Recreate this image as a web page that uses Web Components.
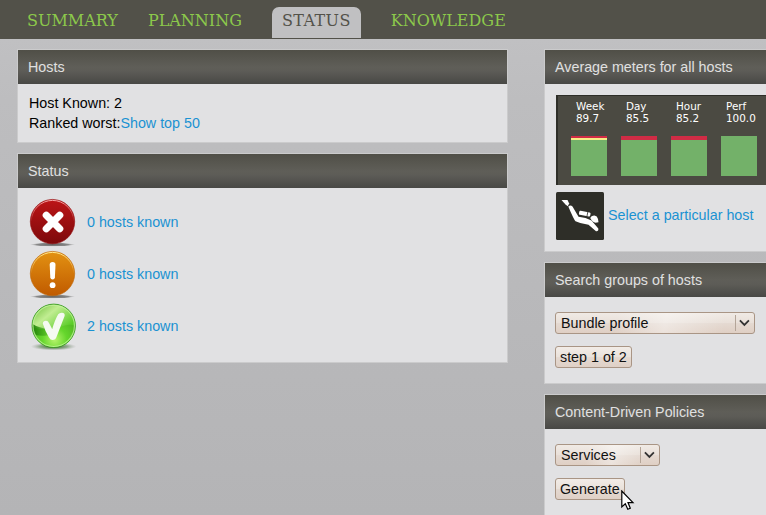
<!DOCTYPE html>
<html lang="en"><head><meta charset="utf-8"><title>Status</title>
<style>
html,body{margin:0;height:100%;overflow:hidden}
body{font:14.3px/20px "Liberation Sans",Arial,sans-serif;color:#000;background:linear-gradient(#c0c0c2 39px,#bdbdbf 100px,#b4b4b6 515px)}
</style></head><body>
<status-page></status-page>
<script>
const define=(name,html,init)=>customElements.define(name,class extends HTMLElement{
  constructor(){super();this.attachShadow({mode:'open'});}
  connectedCallback(){this.shadowRoot.innerHTML=html;if(init)init(this,this.shadowRoot);}
});

define('nav-tab',`<style>
:host{display:block;box-sizing:border-box;height:31px;padding:0 10px;border-radius:7px 7px 0 0;font:16px/27px "DejaVu Serif",serif;color:#8cc84b;white-space:nowrap}
:host([active]){background:#c0c0c2;color:#53524a;margin:0 10px;letter-spacing:.37px}
</style><slot></slot>`);

define('nav-bar',`<style>
:host{display:flex;box-sizing:border-box;height:39px;padding:7px 0 1px 17px;gap:10px;background:#525149}
</style><slot></slot>`);

define('info-panel',`<style>
:host{display:block;box-sizing:border-box;border:1px solid #cbcbcc;background:#e1e1e3}
header{height:34px;box-sizing:border-box;padding-left:10px;line-height:34px;color:#e0e0e0;background:linear-gradient(#504f47,#5f5e58 50%,#5d5c57 62%,#484845);white-space:nowrap}
.body{padding:var(--pad,9px 11px)}
</style><header></header><div class="body"><slot></slot></div>`,(el,r)=>{r.querySelector('header').textContent=el.getAttribute('heading');});

define('text-link',`<style>:host{color:#1a92d2;white-space:nowrap}</style><slot></slot>`);

define('status-icon',`<style>:host{display:block;width:48px;height:52px}svg{display:block}</style><svg width="48" height="52" viewBox="0 0 48 52"></svg>`,(el,r)=>{
  const kind=el.getAttribute('kind');
  const disc=(a,b,rim,edge)=>`<defs><linearGradient id="g" x2="0" y2="1"><stop stop-color="${a}"/><stop offset="1" stop-color="${b}"/></linearGradient>
  <linearGradient id="h" x2="0" y2="1"><stop stop-color="${rim}"/><stop offset=".5" stop-color="${rim}" stop-opacity="0"/></linearGradient>
  <radialGradient id="s"><stop stop-color="#666"/><stop offset=".7" stop-color="#888"/><stop offset="1" stop-color="#aaa" stop-opacity="0"/></radialGradient></defs>
  <ellipse cx="23.5" cy="47.600" rx="22.500" ry="2" fill="url(#s)"/><circle cx="23.5" cy="24.600" r="22.2" fill="url(#g)" stroke="${edge}" stroke-width=".6"/><circle cx="23.5" cy="24.600" r="21.2" fill="none" stroke="url(#h)" stroke-width="1"/>`;
  const art={
    error:disc('#bd1517','#7d090b','#f5a5a5','#930c0e')+`<path d="M17.300 18.300 30.700 31.700M30.700 18.300 17.300 31.700" stroke="#fff" stroke-width="7.200" stroke-linecap="round"/>`,
    warn:disc('#e39212','#c05a00','#ffe891','#bd6706')+`<path d="M20.700 15.8Q20.700 13 23.6 13T26.500 15.8L25.900 28.500Q25.600 30.500 23.6 30.500T21.300 28.500Z" fill="#fff"/><circle cx="23.6" cy="36.200" r="2.900" fill="#fff"/>`,
    ok:`<defs><radialGradient id="g" cx=".52" cy=".82" r=".8"><stop stop-color="#b6f36c"/><stop offset=".35" stop-color="#65d62c"/><stop offset=".8" stop-color="#4aae20"/><stop offset="1" stop-color="#3d9f1a"/></radialGradient>
    <linearGradient id="l" x2="1" y2=".7"><stop stop-color="#69bd35"/><stop offset=".45" stop-color="#c1ed92"/><stop offset="1" stop-color="#58cc26"/></linearGradient>
    <linearGradient id="d" x2="1"><stop stop-color="#218308"/><stop offset=".6" stop-color="#48ad1e" stop-opacity=".5"/><stop offset="1" stop-color="#63ce2a" stop-opacity="0"/></linearGradient>
    <radialGradient id="s"><stop stop-color="#235a12"/><stop offset=".6" stop-color="#71926a" stop-opacity=".7"/><stop offset="1" stop-color="#aaa" stop-opacity="0"/></radialGradient></defs>
    <ellipse cx="24.600" cy="45.5" rx="23" ry="4" fill="url(#s)"/><circle cx="24.700" cy="24.8" r="21.700" fill="url(#g)" stroke="#319518" stroke-width=".8"/>
    <path d="M3.700 24.700A21 21 0 0 1 45.700 24.700C36 20 25 33 3.700 26Z" fill="url(#l)"/><path d="M3.700 23C11 28 22 29 29 25C26 35 15 36 6 34Q3.200 29 3.700 23Z" fill="url(#d)"/>
    <circle cx="24.700" cy="24.8" r="20.700" fill="none" stroke="#c5f5a0" stroke-opacity=".75" stroke-width="1.1"/>
    <path d="M13.800 22.500Q14 20 17 19.800 19 19.800 20 22L23.200 28Q26 18.500 29.200 13.200 30.500 11.500 33 11.700 36.300 12 35.600 15L27.500 36Q26.500 39 23.500 39 21.500 39 20 36.500Q16 30 13.800 22.500Z" fill="#f5faf1"/>`};
  r.querySelector('svg').innerHTML=art[kind];
});

define('status-row',`<style>:host{display:flex;height:52px;gap:10px}text-link{line-height:50px}</style><status-icon></status-icon><text-link><slot></slot></text-link>`,(el,r)=>{
  const i=document.createElement('status-icon');i.setAttribute('kind',el.getAttribute('kind'));r.querySelector('status-icon').replaceWith(i);
});

define('meter-bar',`<style>
:host{display:block;width:36px;color:#fff;font:10.4px/12px "DejaVu Sans",sans-serif;white-space:nowrap}
.t{height:36px;padding-left:5px}.b{display:flex;flex-direction:column;height:40px;background:#73b169}.r{background:#d02c45}.y{background:#f5ee87}
</style><div class="t"><div class="n"></div><div class="v"></div></div><div class="b"><div class="r"></div><div class="y"></div></div>`,(el,r)=>{
  r.querySelector('.n').textContent=el.getAttribute('name');r.querySelector('.v').textContent=el.getAttribute('value');
  r.querySelector('.r').style.height=(el.getAttribute('red')||0)+'px';r.querySelector('.y').style.height=(el.getAttribute('yellow')||0)+'px';
});

define('meter-strip',`<style>:host{display:flex;box-sizing:border-box;width:226px;height:90px;padding:4px 0 0 13px;gap:14px;border:solid #2e2e28;border-width:1px 0 0 2px;background:#4b4a42}</style><slot></slot>`);

define('diver-icon',`<style>:host{display:block;width:48px;height:48px}svg{display:block}</style>
<svg width="48" height="48" viewBox="0 0 48 48"><rect width="48" height="48" rx="1.500" fill="#2e2e28"/>
<g fill="#fff"><path d="M5.500 8 11.500 8 13.200 11.500 11.800 14.200 9.500 12.500Z"/>
<path d="M12.300 14.500Q14.500 12.500 16.500 14.500L22.500 24.800Q30 25.300 35.500 28.500L42.300 36.500Q42.800 39.500 40 39.200L32.500 32.800Q25 32 19.500 29.300Q17.800 27.500 12.300 14.500Z"/>
<rect x="23" y="19.400" width="11.500" height="4.200" rx="1.200" transform="rotate(11 28 21.500)"/><path d="M34.300 26.300Q35 23.800 38.500 23.600 41.300 24 42 27L42.500 30.300 39.500 30.800Q36.500 30.500 34.300 26.300Z"/></g>
<path d="M31.800 20 30.900 24.600" stroke="#2e2e28" stroke-width=".8"/></svg>`);

define('gtk-button',`<style>
:host{display:inline-flex;box-sizing:border-box;height:22px;padding:0 4px;align-items:center;border:1px solid #a99585;border-radius:3px;color:#111;white-space:nowrap;background:linear-gradient(#f2ece7,#eae2db 48%,#e4d9d1 52%,#dfd0c6)}
</style><slot></slot>`);

define('gtk-select',`<style>
:host{display:flex;box-sizing:border-box;height:22px;padding-left:5px;align-items:center;border:1px solid #a99585;border-radius:3px;color:#111;white-space:nowrap;background:linear-gradient(100deg,#fff0 30%,#fff6 55%,#fff0 85%),linear-gradient(#f0eae5,#e9e0d9 48%,#e4d9d1 52%,#dfcfc4)}
.a{margin-left:auto;width:18px;height:16px;border-left:1px solid #b4a598;display:flex;align-items:center}svg{margin-left:3px}
</style><slot></slot><span class="a"><svg width="11" height="8" viewBox="0 0 11 8"><path d="M.900 1.400 5.400 5.900 9.900 1.400" fill="none" stroke="#333" stroke-width="1.800"/></svg></span>`);

define('mouse-pointer',`<style>:host{position:absolute;left:621px;top:490px}svg{display:block}</style>
<svg width="14" height="22" viewBox="0 0 14 22"><path d="M.8 1V17L4.300 13.800 6.800 19.300 9.300 18.200 7 12.600H12Z" fill="#fff" stroke="#000" stroke-width="1.200"/></svg>`);

define('status-page',`<style>
:host{display:block;height:100%}
main{display:grid;grid-template-columns:491px 240px;column-gap:36px;padding:10px 0 0 17px;align-items:start}
.col{display:grid;gap:10px}
.hosts{height:94px}.status{height:210px;--pad:9px 11px}.avg{height:203px;--pad:11px 0 0 11px}.search{height:122px;--pad:15px 10px}.policy{height:131px;--pad:15px 10px}
.pick{display:flex;gap:4px;margin-top:7px}.pick text-link{line-height:47px}
gtk-select{margin-bottom:12px}
</style>
<nav-bar><nav-tab>SUMMARY</nav-tab><nav-tab>PLANNING</nav-tab><nav-tab active>STATUS</nav-tab><nav-tab>KNOWLEDGE</nav-tab></nav-bar>
<main><div class="col">
<info-panel class="hosts" heading="Hosts"><div>Host Known: 2</div><div>Ranked worst:<text-link>Show top 50</text-link></div></info-panel>
<info-panel class="status" heading="Status"><status-row kind="error">0 hosts known</status-row><status-row kind="warn">0 hosts known</status-row><status-row kind="ok">2 hosts known</status-row></info-panel>
</div><div class="col">
<info-panel class="avg" heading="Average meters for all hosts"><meter-strip><meter-bar name="Week" value="89.7" red="2" yellow="2"></meter-bar><meter-bar name="Day" value="85.5" red="4"></meter-bar><meter-bar name="Hour" value="85.2" red="4"></meter-bar><meter-bar name="Perf" value="100.0"></meter-bar></meter-strip>
<div class="pick"><diver-icon></diver-icon><text-link>Select a particular host</text-link></div></info-panel>
<info-panel class="search" heading="Search groups of hosts"><gtk-select style="width:200px">Bundle profile</gtk-select><gtk-button>step 1 of 2</gtk-button></info-panel>
<info-panel class="policy" heading="Content-Driven Policies"><gtk-select style="width:105px">Services</gtk-select><gtk-button>Generate</gtk-button></info-panel>
</div></main><mouse-pointer></mouse-pointer>`);
</script></body></html>
